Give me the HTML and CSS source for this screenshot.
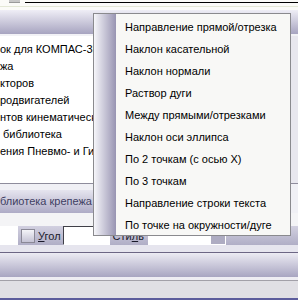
FILE: index.html
```html
<html>
<head>
  <link rel="stylesheet" href="styles.css">
</head>
<body>
<div class="top"><span class="stub"></span><div class="rule"></div><div class="faint"></div></div>
<div class="header"></div>
<div class="list">
    <div class="row">ок для КОМПАС-3D</div>
    <div class="row">жа</div>
    <div class="row">кторов</div>
    <div class="row">родвигателей</div>
    <div class="row">нтов кинематических</div>
    <div class="row">&nbsp;библиотека</div>
    <div class="row">ения Пневмо- и Гидро</div>
    <div class="scroll"></div>
</div>
<div class="tabs"><div class="tab">блиотека крепежа</div></div>
<div class="toolbar">
    <span class="blank"></span>
    <span class="check"></span>
    <span class="lbl"><u>У</u>гол</span>
    <span class="field"></span>
    <span class="lbl">Сти<u>л</u>ь</span>
    <span class="combo"><span class="btn"><i class="dot"></i></span></span>
</div>
<div class="band"></div>
<div class="panel"></div>
<div class="status"></div>

<!-- всплывающее меню -->
<div class="menu">
    <div class="side"></div>
    <div class="items">
        <div class="item">Направление прямой/отрезка</div>
        <div class="item">Наклон касательной</div>
        <div class="item">Наклон нормали</div>
        <div class="item">Раствор дуги</div>
        <div class="item">Между прямыми/отрезками</div>
        <div class="item">Наклон оси эллипса</div>
        <div class="item">По 2 точкам (с осью X)</div>
        <div class="item">По 3 точкам</div>
        <div class="item">Направление строки текста</div>
        <div class="item">По точке на окружности/дуге</div>
    </div>
</div>
</body>
</html>
```

FILE: styles.css
```css
body{
    margin: 0;
    width: 298px;
    height: 300px;
    overflow: hidden;
    position: relative;
    background: #f4f4f6;
    font-family: "Liberation Sans", Arial, sans-serif;
    font-size: 11px;
    color: #000;
}
.top{
    height: 10px;
    background: #fbfbf8;
    position: relative;
}
.stub{
    position: absolute;
    left: 9px;
    top: 0;
    width: 11px;
    height: 2px;
    border-bottom: 1px solid #9a9a9a;
    background: #c8c8c8;
}
.rule{
    margin-left: 25px;
    padding-top: 2px;
    border-bottom: 1px solid #000;
}
.faint{
    margin-top: 3px;
    border-bottom: 1px solid #e4e8d6;
}
.header{
    height: 24px;
    background: linear-gradient(#efeef6, #a7a4c0);
    border-bottom: 2px solid #f2f2f6;
}
.list{
    height: 142px;
    padding-top: 5px;
    background: #fff;
    border-bottom: 1px solid #8e8c9c;
    position: relative;
}
.row{
    height: 17px;
    line-height: 17px;
    white-space: nowrap;
    overflow: hidden;
    width: 290px;
}
.scroll{
    position: absolute;
    right: 0;
    top: 0;
    bottom: 0;
    width: 7px;
    background: #e8e7ee;
}
.tabs{
    padding-top: 6px;
    height: 23px;
    background: #f0f0f5;
}
.tab{
    height: 23px;
    line-height: 23px;
    width: 94px;
    white-space: nowrap;
    overflow: hidden;
    color: #3e3e62;
    background: linear-gradient(#e6e5ef, #aeabc6);
}
.toolbar{
    margin-top: 13px;
    height: 19px;
    display: flex;
    align-items: center;
    background: linear-gradient(#d2d0e0, #b0aec6);
}
.blank{
    width: 18px;
    height: 19px;
    background: #fff;
    margin-right: 3px;
}
.check{
    width: 12px;
    height: 12px;
    border: 1px solid #8a8896;
    background: linear-gradient(#f4f4f8, #c4c2d4);
    margin-right: 3px;
}
.lbl{
    color: #1a1a2a;
    margin-right: 2px;
}
.field{
    width: 45px;
    height: 17px;
    background: #fff;
    border-top: 1px solid #404048;
    border-left: 1px solid #404048;
    border-right: 1px solid #fff;
    border-bottom: 1px solid #fff;
    margin-right: 3px;
}
.combo{
    margin-left: 2px;
    width: 77px;
    height: 19px;
    background: #fff;
    display: flex;
    justify-content: flex-end;
    border-right: 1px solid #fff;
}
.btn{
    width: 14px;
    height: 18px;
    background: #aeacc2;
    border-bottom: 1px solid #fff;
    position: relative;
}
.dot{
    position: absolute;
    left: 6px;
    top: 4px;
    width: 1px;
    height: 2px;
    background: #000;
}
.band{
    height: 7px;
    background: #e6e5ee;
    border-bottom: 1px solid #6c6684;
}
.panel{
    height: 24px;
    background: linear-gradient(#ecebf3, #a8a5c1);
    border-bottom: 3px solid #eeedf3;
}
.status{
    height: 17px;
    border-top: 1px solid #a2a0a8;
    background: #e0dfe4;
    border-bottom: 2px solid #5c5c9c;
}
.menu{
    position: absolute;
    left: 93px;
    top: 13px;
    width: 196px;
    height: 221px;
    border: 1px solid #8a8a8e;
    background: #f8f8f6;
    display: flex;
}
.side{
    width: 22px;
    background: linear-gradient(to right, #f6f6fa, #9894b2);
}
.items{
    padding-top: 2px;
    padding-left: 9px;
}
.item{
    height: 22px;
    line-height: 22px;
    white-space: nowrap;
}
```
